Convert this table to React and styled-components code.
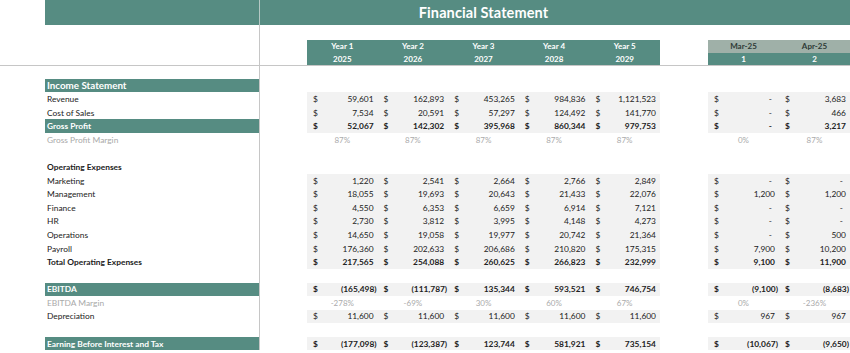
import React from 'react';
import styled, { createGlobalStyle } from 'styled-components';

const TEAL = '#568c82';
const LINE = '#c6c6c6';
const COLS = '45px 215px 47px repeat(5, 70.6px) 48px repeat(2, 71px)';

const GlobalStyle = createGlobalStyle`
  html, body {
    margin: 0;
    padding: 0;
    background: #fff;
  }
  body {
    font-family: Lato, "Liberation Sans", Arial, sans-serif;
    color: #222;
    overflow: hidden;
  }
`;

const Sheet = styled.div`
  width: 850px;
  height: 353px;
  overflow: hidden;
  background: #fff;
`;

const Row = styled.div`
  display: grid;
  grid-template-columns: ${COLS};
  height: ${p => p.$h || 13.6}px;
  box-sizing: border-box;
  border-top: ${p => (p.$divider ? `1px solid ${LINE}` : 'none')};
`;

const Blank = styled.div``;

const Label = styled.div`
  display: flex;
  align-items: center;
  padding-left: 2px;
  white-space: nowrap;
  border-right: 1px solid ${LINE};
  font-size: ${p => (p.$kind === 'heading' ? '9.8px' : '8.4px')};
  font-weight: ${p => (['band', 'heading', 'bold'].includes(p.$kind) ? 700 : 400)};
  color: ${p =>
    p.$kind === 'band' || p.$kind === 'heading' ? '#fff' : p.$kind === 'muted' ? '#a9a9a9' : '#222'};
  background: ${p => (p.$kind === 'band' || p.$kind === 'heading' ? TEAL : 'transparent')};
`;

const TitleBand = styled.div`
  background: ${TEAL};
  color: #fff;
  display: flex;
  align-items: center;
  justify-content: center;
  font-size: 14.5px;
  font-weight: 700;
  letter-spacing: 0.1px;
  grid-column: ${p => p.$span || 'auto'};
  border-right: ${p => (p.$line ? '1px solid rgba(205, 215, 212, 0.8)' : 'none')};
`;

const HeadCell = styled.div`
  display: flex;
  align-items: center;
  justify-content: center;
  font-size: 8px;
  font-weight: 700;
  background: ${p => (p.$muted ? '#9fb0a8' : TEAL)};
  color: ${p => (p.$muted ? '#2e3a36' : '#fff')};
`;

const Cell = styled.div`
  display: flex;
  align-items: center;
  justify-content: space-between;
  padding: 0 1px 0 6px;
  font-size: 8.4px;
  font-weight: ${p => (p.$bold ? 700 : 400)};
  background: #f2f2f2;
  white-space: nowrap;
`;

const Amount = styled.span`
  margin-right: ${p => (p.$neg ? 0 : p.$dash ? 6 : 3)}px;
`;

const Pct = styled.div`
  display: flex;
  align-items: center;
  justify-content: center;
  font-size: 8px;
  color: #ababab;
`;

const years = [
  { name: 'Year 1', year: '2025' },
  { name: 'Year 2', year: '2026' },
  { name: 'Year 3', year: '2027' },
  { name: 'Year 4', year: '2028' },
  { name: 'Year 5', year: '2029' },
];

const months = [
  { name: 'Mar-25', idx: '1' },
  { name: 'Apr-25', idx: '2' },
];

const rows = [
  { type: 'blank' },
  { type: 'label', label: 'Income Statement', kind: 'heading' },
  { type: 'money', label: 'Revenue', y: [59601, 162893, 453265, 984836, 1121523], m: [0, 3683] },
  { type: 'money', label: 'Cost of Sales', y: [7534, 20591, 57297, 124492, 141770], m: [0, 466] },
  { type: 'money', label: 'Gross Profit', kind: 'band', bold: true, y: [52067, 142302, 395968, 860344, 979753], m: [0, 3217] },
  { type: 'pct', label: 'Gross Profit Margin', y: ['87%', '87%', '87%', '87%', '87%'], m: ['0%', '87%'] },
  { type: 'blank' },
  { type: 'label', label: 'Operating Expenses', kind: 'bold' },
  { type: 'money', label: 'Marketing', y: [1220, 2541, 2664, 2766, 2849], m: [0, 0] },
  { type: 'money', label: 'Management', y: [18055, 19693, 20643, 21433, 22076], m: [1200, 1200] },
  { type: 'money', label: 'Finance', y: [4550, 6353, 6659, 6914, 7121], m: [0, 0] },
  { type: 'money', label: 'HR', y: [2730, 3812, 3995, 4148, 4273], m: [0, 0] },
  { type: 'money', label: 'Operations', y: [14650, 19058, 19977, 20742, 21364], m: [0, 500] },
  { type: 'money', label: 'Payroll', y: [176360, 202633, 206686, 210820, 175315], m: [7900, 10200] },
  { type: 'money', label: 'Total Operating Expenses', kind: 'bold', bold: true, y: [217565, 254088, 260625, 266823, 232999], m: [9100, 11900] },
  { type: 'blank' },
  { type: 'money', label: 'EBITDA', kind: 'band', bold: true, y: [-165498, -111787, 135344, 593521, 746754], m: [-9100, -8683] },
  { type: 'pct', label: 'EBITDA Margin', y: ['-278%', '-69%', '30%', '60%', '67%'], m: ['0%', '-236%'] },
  { type: 'money', label: 'Depreciation', y: [11600, 11600, 11600, 11600, 11600], m: [967, 967] },
  { type: 'blank' },
  { type: 'money', label: 'Earning Before Interest and Tax', kind: 'band', bold: true, y: [-177098, -123387, 123744, 581921, 735154], m: [-10067, -9650] },
];

const fmt = v => {
  if (v === 0) return '-';
  const s = Math.abs(v).toLocaleString('en-US');
  return v < 0 ? `(${s})` : s;
};

function Money({ value, bold }) {
  return (
    <Cell $bold={bold}>
      <span>$</span>
      <Amount $neg={value < 0} $dash={value === 0}>{fmt(value)}</Amount>
    </Cell>
  );
}

function SheetRow({ row, divider }) {
  const label = row.type === 'pct' ? 'muted' : row.kind;
  return (
    <Row $divider={divider}>
      <Blank />
      <Label $kind={label}>{row.label}</Label>
      <Blank />
      {row.type === 'money' && row.y.map((v, i) => <Money key={i} value={v} bold={row.bold} />)}
      {row.type === 'pct' && row.y.map((v, i) => <Pct key={i}>{v}</Pct>)}
      {(row.type === 'blank' || row.type === 'label') && years.map((_, i) => <Blank key={i} />)}
      <Blank />
      {row.type === 'money' && row.m.map((v, i) => <Money key={i} value={v} bold={row.bold} />)}
      {row.type === 'pct' && row.m.map((v, i) => <Pct key={i}>{v}</Pct>)}
    </Row>
  );
}

export default function App() {
  return (
    <Sheet>
      <GlobalStyle />
      <Row $h={25}>
        <Blank />
        <TitleBand $line />
        <TitleBand />
        <TitleBand $span="4 / 9">Financial Statement</TitleBand>
        <TitleBand $span="9 / 12" />
      </Row>
      <Row $h={15}>
        <Blank />
        <Label />
      </Row>
      <Row $h={12.5}>
        <Blank />
        <Label />
        <Blank />
        {years.map(y => <HeadCell key={y.name}>{y.name}</HeadCell>)}
        <Blank />
        {months.map(m => <HeadCell key={m.name} $muted>{m.name}</HeadCell>)}
      </Row>
      <Row $h={12.5}>
        <Blank />
        <Label />
        <Blank />
        {years.map(y => <HeadCell key={y.year}>{y.year}</HeadCell>)}
        <Blank />
        {months.map(m => <HeadCell key={m.idx}>{m.idx}</HeadCell>)}
      </Row>
      {rows.map((r, i) => (
        <SheetRow key={i} row={r} divider={i === 0} />
      ))}
    </Sheet>
  );
}
